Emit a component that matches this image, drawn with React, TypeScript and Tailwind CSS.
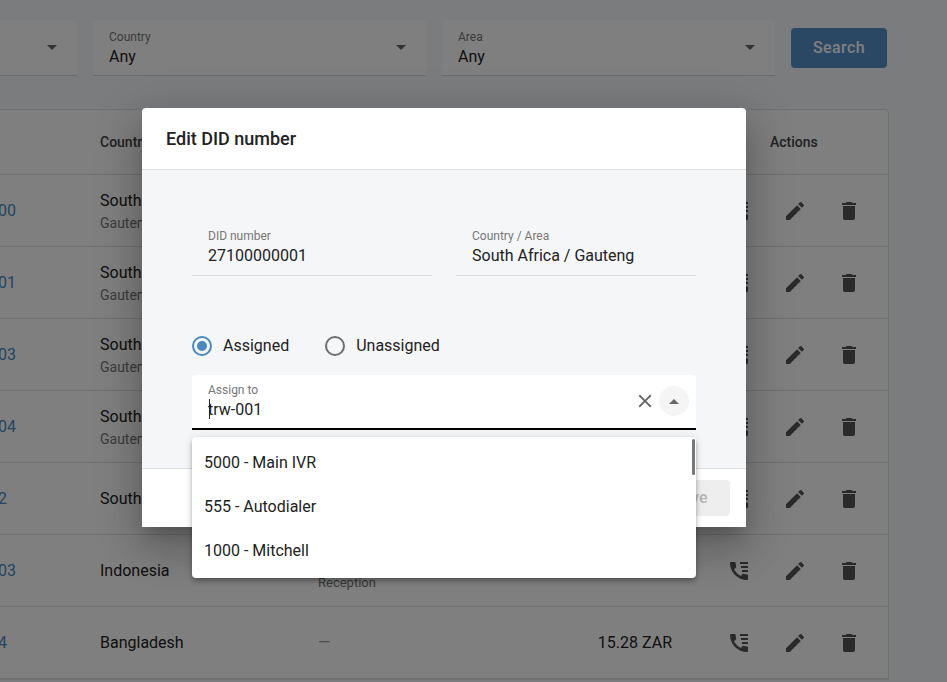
import { MdClose, MdDelete, MdEdit } from "react-icons/md";

const rows = [
  { id: "27100000000", country: "South Africa", area: "Gauteng", assigned: "trw-001", note: "Reception", cost: "15.28 ZAR" },
  { id: "27100000001", country: "South Africa", area: "Gauteng", assigned: "trw-001", note: "Reception", cost: "15.28 ZAR" },
  { id: "27100000003", country: "South Africa", area: "Gauteng", assigned: "trw-002", note: "Sales", cost: "15.28 ZAR" },
  { id: "27100000004", country: "South Africa", area: "Gauteng", assigned: "trw-003", note: "Support", cost: "15.28 ZAR" },
  { id: "2710000002", country: "South Africa", area: "", assigned: "—", note: "", cost: "15.28 ZAR" },
  { id: "62100000003", country: "Indonesia", area: "", assigned: "trw-004", note: "Reception", cost: "15.28 ZAR" },
  { id: "8800000004", country: "Bangladesh", area: "", assigned: "—", note: "", cost: "15.28 ZAR" },
];

function CallList() {
  return (
    <svg viewBox="0 0 24 24" className="w-6 h-6" fill="currentColor">
      <path d="M20.01 15.38c-1.23 0-2.42-.2-3.53-.56a.977.977 0 0 0-1.01.24l-1.57 1.97c-2.83-1.35-5.48-3.9-6.89-6.83l1.95-1.66c.27-.28.35-.67.24-1.02-.37-1.11-.56-2.3-.56-3.53 0-.54-.45-.99-.99-.99H4.19C3.65 3 3 3.24 3 3.99 3 13.28 10.73 21 20.01 21c.71 0 .99-.63.99-1.18v-3.45c0-.54-.45-.99-.98-.99z" />
      <path d="M13 3h8v2h-8zM14 7h7v2h-7zM15 11h6v2h-6z" />
    </svg>
  );
}

function Filter({ label }: { label: string }) {
  return (
    <div className="w-[333px] h-14 shrink-0 flex items-center justify-between bg-[#ffffff] rounded-t border-b border-[#d8d8d8] pl-4 pr-4">
      <div>
        <div className="text-xs leading-4 text-[#777777] mt-0.5">{label}</div>
        <div className="text-base leading-6 text-[#222222]">Any</div>
      </div>
      <div className="w-0 h-0 mr-1 border-x-[5px] border-x-transparent border-t-[5px] border-t-[#666666]" />
    </div>
  );
}

function ReadField({ label, value }: { label: string; value: string }) {
  return (
    <div className="w-60 h-12 border-b border-[#dcdde0] pl-4">
      <div className="text-xs leading-4 text-[#777777]">{label}</div>
      <div className="text-base leading-6 text-[#222222]">{value}</div>
    </div>
  );
}

function Radio({ label, checked }: { label: string; checked?: boolean }) {
  return (
    <div className="flex items-center gap-[11px]">
      <div className={`w-5 h-5 rounded-full border-2 flex items-center justify-center ${checked ? "border-[#4a88be]" : "border-[#6e6e6e]"}`}>
        {checked && <div className="w-2.5 h-2.5 rounded-full bg-[#4a88be]" />}
      </div>
      <span className="text-base leading-6 text-[#222222]">{label}</span>
    </div>
  );
}

export default function App() {
  return (
    <div className="relative w-[947px] h-[682px] overflow-hidden bg-[#f6f8fa] font-['Roboto',sans-serif]">
      <div className="w-[1203px] -ml-[256px] pt-5">
        <div className="flex items-start gap-4">
          <Filter label="Number" />
          <Filter label="Country" />
          <Filter label="Area" />
          <button className="w-24 h-10 mt-2 rounded bg-[#5590c8] text-white text-base font-medium tracking-wide">Search</button>
        </div>
        <div className="ml-[148px] mt-[33px] w-[997px] bg-white border border-[#e0e0e0] rounded-t">
          <div className="h-[65px] flex items-center border-b border-[#e0e0e0] pl-6 text-sm font-medium text-[#444444]">
            <div className="w-[183px] shrink-0">DID number</div>
            <div className="w-[218px] shrink-0">Country / Area</div>
            <div className="w-[229px] shrink-0">Assigned to</div>
            <div className="w-[125px] shrink-0 text-right">Cost</div>
            <div className="pl-[98px]">Actions</div>
          </div>
          {rows.map((r) => (
            <div key={r.id} className="h-[72px] flex items-center border-b border-[#e0e0e0] pl-6 text-base text-[#222222]">
              <div className="w-[183px] shrink-0 text-[#4a88be]">{r.id}</div>
              <div className="w-[218px] shrink-0">
                <div className="leading-6">{r.country}</div>
                {r.area && <div className="text-sm leading-5 text-[#777777]">{r.area}</div>}
              </div>
              <div className="w-[229px] shrink-0">
                <div className={`leading-6 ${r.note ? "" : "text-[#999999]"}`}>{r.assigned}</div>
                {r.note && <div className="text-[13px] leading-4 text-[#777777]">{r.note}</div>}
              </div>
              <div className="w-[125px] shrink-0 text-right">{r.cost}</div>
              <div className="flex items-center pl-[55px] text-[#555555]">
                <CallList />
                <MdEdit className="w-6 h-6 ml-8" />
                <MdDelete className="w-6 h-6 ml-[30px]" />
              </div>
            </div>
          ))}
        </div>
      </div>

      <div className="absolute inset-0 bg-black/50" />

      <div className="absolute left-[142px] top-[108px] w-[604px] h-[419px] flex flex-col rounded bg-white shadow-[0_11px_15px_-7px_rgba(0,0,0,0.2),0_24px_38px_3px_rgba(0,0,0,0.14),0_9px_46px_8px_rgba(0,0,0,0.12)]">
        <div className="h-[62px] shrink-0 flex items-center border-b border-[#e0e0e0] px-6 text-lg font-medium text-[#222222]">Edit DID number</div>
        <div className="flex-1 bg-[#f5f6f8] px-[50px] pt-[58px]">
          <div className="flex gap-6">
            <ReadField label="DID number" value="27100000001" />
            <ReadField label="Country / Area" value="South Africa / Gauteng" />
          </div>
          <div className="flex gap-9 mt-[58px]">
            <Radio label="Assigned" checked />
            <Radio label="Unassigned" />
          </div>
          <div className="relative h-[55px] mt-[17px] flex items-center justify-between bg-white rounded-t border-b-2 border-black pl-4 pr-[7px]">
            <div>
              <div className="text-xs leading-4 text-[#777777]">Assign to</div>
              <div className="text-base leading-6 text-[#222222]">trw-001</div>
            </div>
            <div className="absolute left-[17px] top-[24px] w-px h-5 bg-[#222222]" />
            <div className="flex items-center gap-[3px] -mt-[1px]">
              <MdClose className="w-[22px] h-[22px] text-[#666666]" />
              <div className="w-[30px] h-[30px] rounded-full bg-[#f5f5f5] flex items-center justify-center">
                <div className="w-0 h-0 border-x-[5px] border-x-transparent border-b-[5px] border-b-[#666666]" />
              </div>
            </div>
          </div>
        </div>
        <div className="h-[59px] shrink-0 flex items-center justify-end gap-2 bg-white border-t border-[#e0e0e0] pr-4">
          <button className="h-9 px-4 text-sm font-medium text-[#888888]">Cancel</button>
          <button className="h-9 w-20 rounded bg-[#eeeeee] text-base font-medium tracking-wide text-[#b5b5b5]">Save</button>
        </div>
      </div>

      <div className="absolute left-[192px] top-[437px] w-[504px] h-[141px] overflow-hidden rounded bg-white pt-1 text-base text-[#222222] shadow-[0_2px_4px_-1px_rgba(0,0,0,0.2),0_4px_5px_0_rgba(0,0,0,0.14),0_1px_10px_0_rgba(0,0,0,0.12)]">
        <div className="h-11 flex items-center px-3">5000 - Main IVR</div>
        <div className="h-11 flex items-center px-3">555 - Autodialer</div>
        <div className="h-11 flex items-center px-3">1000 - Mitchell</div>
        <div className="absolute right-[1px] top-[2px] w-[3px] h-9 rounded-sm bg-[#777777]" />
      </div>
    </div>
  );
}
